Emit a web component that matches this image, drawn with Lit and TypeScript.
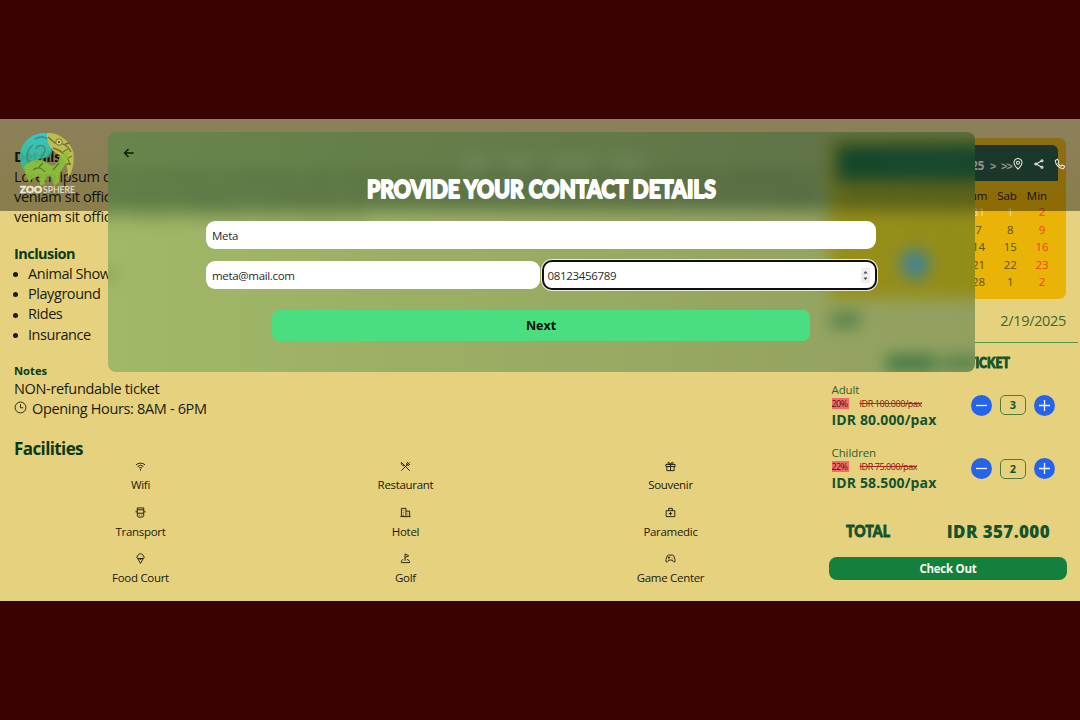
import { LitElement, html, css, svg } from "lit";
import { customElement, property, state } from "lit/decorators.js";
import { classMap } from "lit/directives/class-map.js";

const ICONS: Record<string, unknown> = {
  wifi: svg`<path d="M2 8.500a15 15 0 0 1 20 0M5.500 12a10 10 0 0 1 13 0M8.800 15.400a5 5 0 0 1 6.400 0M12 17v4"/>`,
  restaurant: svg`<path d="M3 3l18 18M21 3L3 21M3 3c-1 4 1 7 6 8M17 2l-3 5 3 3 5-3M16 16l4 4"/>`,
  souvenir: svg`<path d="M2 7.500h20v4.500H2zM4 12v9h16v-9M12 7.500V21M12 7c-2-5-6-5-6-2.500S9 7 12 7c3 0 6 0 6-2.500S14 2 12 7"/>`,
  transport: svg`<path d="M5 2h14v17l-2 3H7l-2-3zM5 6h14M5 13.500h14M2.500 8v4M21.500 8v4"/><path d="M8 17.500h2M14 17.500h2"/>`,
  hotel: svg`<path d="M3 21V3h10v18M13 9h8v12M1 21h22M7 7v2M7 12v2M7 17v4M17 13v1M17 17v1"/>`,
  paramedic: svg`<path d="M2.500 8h19v13h-19zM8 8V3h8v5M12 11v7M8.500 14.500h7"/>`,
  food: svg`<path d="M6 12c-3-1-3-5 0-5 0-7 12-7 12 0 3 0 3 4 0 5zM6 12l6 11 6-11M9 12l3 3 3-3"/>`,
  golf: svg`<path d="M11 17V2l8 4-8 4M7 14c-3 1-4 3-4 7h18c0-4-2-6-6-7"/>`,
  game: svg`<path d="M7 4.500h10c3 0 5 10 5 13 0 3-3 3-4 1l-2-3H8l-2 3c-1 2-4 2-4-1C2 14.500 4 4.500 7 4.500zM6 10h5M8.500 7.500v5M15 8.500v.8M17.500 11.500v.8"/>`,
  clock: svg`<circle cx="12" cy="12" r="10"/><path d="M12 6v6.500h5"/>`,
  pin: svg`<path d="M12 22s8-7.500 8-13a8 8 0 0 0-16 0c0 5.500 8 13 8 13z"/><circle cx="12" cy="9.500" r="3"/>`,
  share: svg`<path d="M18 5.500L6 12l12 6.500"/><circle cx="18" cy="5.500" r="2"/><circle cx="5.500" cy="12" r="2"/><circle cx="18" cy="18.500" r="2"/>`,
  phone: svg`<path d="M7 2.500L2.500 5C3 14 10 21 19 21.500l2.500-4.500-5-3-2.500 2.500c-2.500-1.200-5-3.500-6-6L10 8z"/>`,
  back: svg`<path d="M21.500 12H3.500M11 3.800L3 12l8 8.200"/>`,
};

const icon = (name: string) =>
  html`<svg class="icon" viewBox="0 0 24 24" fill="none" stroke="currentColor">${ICONS[name]}</svg>`;

/** Chunky display lettering, stretched to a set width. */
const display = (text: string, width: number, height: number) => html`
  <svg class="display" width=${width} height=${height} viewBox="0 0 ${width} ${height}">
    <text x="0" y=${height * 0.88} font-size=${height * 1.02} textLength=${width}
      lengthAdjust="spacingAndGlyphs">${text}</text>
  </svg>`;

/** The page as it shows through the frosted dialog: soft shapes, in page coordinates. */
const frostedScene = html`
  <svg class="frost" viewBox="108 132 867 240">
    <rect x="60" y="80" width="980" height="340" fill="#e6d27e"/>
    <g stroke="#1d1a0c" stroke-width="8" opacity=".24" fill="none">
      <path d="M90 177H820" stroke-dasharray="40 5 22 4 55 5 78 6 31 4"/>
      <path d="M90 197H818" stroke-dasharray="25 4 48 5 64 5 20 4 72 6"/>
      <path d="M90 216H365" stroke-dasharray="30 5 52 4 70 5"/>
      <path d="M80 274H116"/>
    </g>
    <rect x="829" y="138" width="237" height="161" rx="7" fill="#eab308"/>
    <path d="M837 145h221v36H837z" fill="#1d5c34"/>
    <path d="M885 165h92" stroke="#f4f0dc" stroke-width="6" opacity=".16"/>
    <g stroke="#5c5208" stroke-width="6" stroke-dasharray="12 20" opacity=".12">
      <path d="M846 230h135M846 247h135M846 265h135M846 282h135"/>
    </g>
    <path d="M850 196h140" stroke="#1d1a0c" stroke-width="7" stroke-dasharray="20 10" opacity=".25"/>
    <circle cx="915" cy="264" r="14.500" fill="#5b9fd8"/>
    <path d="M831 320h29" stroke="#2a6a34" stroke-width="13" opacity=".65"/>
    <path d="M886 363h50" stroke="#237038" stroke-width="15" opacity=".75"/>
    <path d="M942 363h40" stroke="#237038" stroke-width="14" opacity=".55"/>
    <rect x="60" y="80" width="980" height="131.500" fill="#05050f" opacity=".38"/>
    <path d="M462 164H645" stroke="#e9e6d8" stroke-width="10" stroke-dasharray="27 14 30 18 42 14 38 10" opacity=".25"/>
  </svg>`;

@customElement("zoo-logo")
export class ZooLogo extends LitElement {
  static styles = css`
    :host { display: block; width: 56px; height: 66px; }
    svg { display: block; }
    text { font-family: "Lato", sans-serif; fill: #ebe8dc; }
    .zoo { stroke: #ebe8dc; stroke-width: .5; }
  `;
  render() {
    return html`<svg width="56" height="66" viewBox="0 0 56 66" fill="none">
      <defs><linearGradient id="t" x1="0" y1="0" x2="0" y2="1">
        <stop offset="0" stop-color="#27d3d3"/><stop offset="1" stop-color="#3cb489"/></linearGradient></defs>
      <path d="M28 2C13 1 2 11 1 24c0 7 1 12 4 16 2-7 7-8 12-10 4-3 5-2 9-3 5-2 8-7 7-13-1-5-3-8-5-12z" fill="url(#t)" opacity=".88"/>
      <path d="M16 8c8-5 17 0 17 9 0 6-3 9-6 10M14 14c-6 4-7 12-4 17M17 18c2-5 8-4 9 0 1 5-5 5-4 10" stroke="#4f8477" stroke-width="1.500"/>
      <path d="M28 2c11-1 22 7 26 18 2 9 0 20-5 27 0-10-1-17-9-23-6-4-13-10-12-22z" fill="#c3c74b" opacity=".88"/>
      <path d="M29 6l7 6c6-1 13 2 16 9M34 17c8 2 15 8 17 17M46 13l5-1M49 27l4-2M44 21l5-3M47 33l5 0" stroke="#756d37" stroke-width="1.300"/>
      <circle cx="40" cy="11" r="3.200" fill="#ddd784" stroke="#756d37"/><circle cx="40" cy="11" r="1.200" fill="#665f35"/>
      <path d="M5 36c5-5 9-7 14-7 4-1 7 1 10 4l5 2c4-2 6-5 7-11l9-4c0 8-4 15-9 21l-1 10-5 4-2-9-5-1-3 9h-4l-1-9-6 2-4 4-3-6z" fill="#8bc33a" opacity=".88"/>
      <path d="M14 39c5-4 9-2 12 2M34 39l6-7M24 32l-4 4" stroke="#4b7d2c" stroke-width="1.200"/>
      <text class="zoo" x="1" y="61.500" font-size="9.500" font-weight="900" textLength="22" lengthAdjust="spacingAndGlyphs">ZOO</text>
      <text x="24" y="61.500" font-size="9" textLength="32" lengthAdjust="spacingAndGlyphs">SPHERE</text>
    </svg>`;
  }
}

@customElement("app-root")
export class AppRoot extends LitElement {
  @property({ type: String }) name = "Meta";
  @property({ type: String }) email = "meta@mail.com";
  @property({ type: String }) phone = "08123456789";
  @state() private tickets = [
    { label: "Adult", off: "20%", was: "IDR 100.000/pax", price: "IDR 80.000/pax", count: 3 },
    { label: "Children", off: "22%", was: "IDR 75.000/pax", price: "IDR 58.500/pax", count: 2 },
  ];

  static styles = css`
    :host {
      display: flex; flex-direction: column; justify-content: flex-start;
      box-sizing: border-box; width: 1080px; height: 720px; padding-top: 119px;
      background: #3b0202; font-family: "Open Sans", "Noto Sans", sans-serif; color: #1d1a0c;
    }
    * { box-sizing: border-box; }
    .icon { display: block; width: 12px; height: 12px; stroke-width: 2; flex: none; }
    .display { display: block; overflow: visible; font-family: "Lato", sans-serif; font-weight: 900;
      fill: currentColor; stroke: currentColor; stroke-linejoin: round; }
    .stage { position: relative; height: 482px; overflow: hidden; background: #e6d27e; display: flex; }

    .info { width: 821px; padding: 28px 0 0 14px; font-size: 14.500px; line-height: 20.100px; letter-spacing: -.340px; white-space: nowrap; }
    .info h3 { margin: 0; font-size: 14.500px; line-height: 20px; letter-spacing: -.550px; color: #0b3a17; }
    .info .dark { color: #14210c; }
    .info ul { margin: 0 0 18px; padding: 0; list-style: none; }
    .info li { display: flex; align-items: center; gap: 9px; letter-spacing: -.440px; }
    .info li::before { content: ""; width: 5px; height: 5px; border-radius: 50%; background: currentColor; margin: 1px 1px 0 -1px; }
    .info .inclusion { margin-top: 17px; }
    .info h4 { margin: 0; font-size: 11.200px; line-height: 16px; letter-spacing: 0; color: #0b3a17; }
    .hours { display: flex; align-items: center; gap: 5px; }
    .hours .icon { width: 13px; height: 13px; stroke-width: 1.700; margin-top: -3px; }
    .info h2 { margin: 18px 0 0; font-size: 17px; line-height: 24px; letter-spacing: -.600px; color: #0b3a17; }
    .facilities { display: grid; grid-template-columns: repeat(3, 265px); margin-left: -6px; }
    .facility { height: 46.200px; display: flex; flex-direction: column; align-items: center;
      font-size: 11.500px; line-height: 16px; gap: 5.500px; letter-spacing: -.300px; }
    .facility .icon { width: 11px; height: 11px; }

    .booking { width: 259px; padding: 19px 0 0 8px; color: #14532d; }
    .calendar { width: 237px; height: 161px; border-radius: 7px; background: #eab308; padding: 7px 8px; }
    .month { height: 36px; border-radius: 6px 6px 0 0; background: #28583a; color: #f4f0dc; display: flex;
      align-items: center; justify-content: flex-end; gap: 5.500px; padding: 5px 46px 0 0; font-size: 11.500px; font-weight: 700; }
    .arrow { font: 700 10.500px "Liberation Sans", sans-serif; letter-spacing: -.600px; }
    .weekdays { display: grid; grid-template-columns: repeat(7, 30px); padding-left: 5px; margin-top: 5.500px;
      font-size: 11.500px; line-height: 18px; color: #1d1a0c; text-align: center; }
    .days { display: grid; grid-template-columns: repeat(7, 31.700px); margin: -1.500px 0 0 -1px; text-align: center;
      font-size: 11.500px; line-height: 17.500px; color: #5c5208; }
    .day.sunday { color: #f0441c; }
    .day.muted { color: #f0deb0; }
    .date { display: flex; justify-content: flex-end; width: 237px; margin-top: 11px; height: 21px;
      font-size: 14.500px; line-height: 21px; letter-spacing: -.330px; color: #456330; }
    .rule { height: 1px; margin-top: 11px; width: 249px; background: #57984a; }
    .booking .title { display: flex; margin: 13px 0 0 139px; height: 12px; stroke-width: .9; }
    .ticket { display: flex; justify-content: space-between; align-items: center; height: 63.500px; padding: 0 25px 0 2.500px; }
    .tickets { padding-top: 6.500px; }
    .kind { font-size: 11.500px; line-height: 14px; letter-spacing: -.100px; color: #315f2c; }
    .deal { display: flex; gap: 11px; height: 13px; align-items: center; font-size: 9px; line-height: 11px; color: #7a1712; }
    .off { background: #f06a68; width: 17px; letter-spacing: -.600px; color: #4c1410; }
    .was { text-decoration: line-through; text-decoration-color: #b3201a; letter-spacing: -.430px; white-space: nowrap; }
    .price { font-size: 14px; line-height: 20px; letter-spacing: .130px; font-weight: 700; color: #14532d; white-space: nowrap; }
    .stepper { display: flex; align-items: center; gap: 8px; margin-top: -2px; }
    .round { width: 21px; height: 21px; border-radius: 50%; border: 0; padding: 0; background: #2563eb; color: #f3f5ff;
      display: grid; place-items: center; }
    .round svg { width: 13px; height: 13px; stroke: currentColor; stroke-width: 1.300; }
    .count { width: 26px; height: 20px; border: 1px solid #4f7c3a; border-radius: 5px; font-size: 11px; font-weight: 700;
      line-height: 18px; text-align: center; }
    .total { display: flex; justify-content: space-between; align-items: center; width: 221px; height: 22px; padding-left: 17px;
      margin-top: 19.500px; stroke-width: .9; }
    .total .display { margin-top: -4px; }
    .sum { font-size: 17px; font-weight: 800; letter-spacing: .380px; line-height: 22px; }
    .checkout { display: block; margin-top: 14px; width: 238px; height: 23px; border: 0; border-radius: 8px; background: #15803d;
      color: #f4fbf2; font: 700 11.500px/23px "Open Sans", sans-serif; letter-spacing: -.250px; padding: 0; }

    .topbar { position: absolute; inset: 0 0 auto 0; height: 92px; padding: 12px 14px 0 19px; display: flex;
      justify-content: space-between;
      background: linear-gradient(rgba(14, 14, 40, .42), rgba(0, 0, 0, .4)); color: #e9e6d8; }
    .links { display: flex; gap: 9px; margin: 27px 0 0; }
    .links .icon { stroke-width: 2.100; }

    .modal { position: absolute; left: 108px; top: 13px; width: 867px; height: 240px; border-radius: 8px; overflow: hidden; }
    .frost { position: absolute; left: 0; top: 0; width: 867px; height: 240px; overflow: visible; filter: blur(8px); }
    .sheet { position: relative; height: 100%; padding: 15px 99px 0 98px; display: flex; flex-direction: column; align-items: center;
      background: linear-gradient(90deg, rgba(30, 135, 60, .35), rgba(20, 83, 50, .4)); }
    .back { align-self: flex-start; margin-left: -83px; border: 0; background: none; padding: 0; color: #10180c; height: 12px; }
    .back .icon { stroke-width: 2.800; }
    .heading { margin: 17px 0 20px; color: #fff; stroke-width: 1.900; height: 25px; display: grid; place-items: center; }
    .fields { display: grid; grid-template-columns: 333.500px 333.500px; gap: 12px 3px; }
    .field { height: 28px; border-radius: 9px; background: #fff; font-size: 11.500px; line-height: 28px; padding: 1px 6px 0;
      letter-spacing: -.320px; color: #2b2b2b; display: flex; justify-content: space-between; align-items: center; }
    .field.wide { grid-column: span 2; }
    .field.focused { outline: 2px solid #101010; outline-offset: -1px; box-shadow: 0 0 0 2px #e9eddb; padding-left: 5px; }
    .spin { width: 9px; height: 15px; background: #efefef; }
    .next { width: 538px; height: 31px; margin-top: 21px; border: 0; border-radius: 7px; background: #4ade80; color: #06130a;
      font: 700 12.500px/32px "Open Sans", sans-serif; padding: 0; }
  `;

  private renderCalendar() {
    const labels = ["Sen", "Sel", "Rab", "Kam", "Jum", "Sab", "Min"];
    const days = [27, 28, 29, 30, 31, ...Array.from({ length: 28 }, (_, i) => i + 1), 1, 2];
    return html`<div class="calendar">
      <div class="month"><span class="arrow">&lt;&lt;</span><span class="arrow">&lt;</span><span>Februari 2025</span><span class="arrow">&gt;</span><span class="arrow">&gt;&gt;</span></div>
      <div class="weekdays">${labels.map((l) => html`<span>${l}</span>`)}</div>
      <div class="days">
        ${days.map((d, i) => html`<span class=${classMap({
          day: true, sunday: i % 7 === 6, muted: i < 6,
        })}>${d}</span>`)}
      </div>
    </div>`;
  }

  private renderTicket(t: (typeof this.tickets)[number]) {
    return html`<div class="ticket">
      <div>
        <div class="kind">${t.label}</div>
        <div class="deal"><span class="off">${t.off}</span><span class="was">${t.was}</span></div>
        <div class="price">${t.price}</div>
      </div>
      <div class="stepper">
        <button class="round"><svg viewBox="0 0 13 13"><path d="M1 6.500h11"/></svg></button>
        <span class="count">${t.count}</span>
        <button class="round"><svg viewBox="0 0 13 13"><path d="M1 6.500h11M6.500 1v11"/></svg></button>
      </div>
    </div>`;
  }

  render() {
    const facilities = [
      ["wifi", "Wifi"], ["restaurant", "Restaurant"], ["souvenir", "Souvenir"],
      ["transport", "Transport"], ["hotel", "Hotel"], ["paramedic", "Paramedic"],
      ["food", "Food Court"], ["golf", "Golf"], ["game", "Game Center"],
    ];
    return html`<main class="stage">
      <section class="info">
        <h3 class="dark">Details</h3>
        <div>Lorem ipsum dolor</div>
        <div>veniam sit officia</div>
        <div>veniam sit officia</div>
        <h3 class="inclusion">Inclusion</h3>
        <ul><li>Animal Show</li><li>Playground</li><li>Rides</li><li>Insurance</li></ul>
        <h4>Notes</h4>
        <div>NON-refundable ticket</div>
        <div class="hours">${icon("clock")}<span>Opening Hours: 8AM - 6PM</span></div>
        <h2>Facilities</h2>
        <div class="facilities">
          ${facilities.map(([i, l]) => html`<div class="facility">${icon(i)}<span>${l}</span></div>`)}
        </div>
      </section>

      <aside class="booking">
        ${this.renderCalendar()}
        <div class="date">2/19/2025</div>
        <div class="rule"></div>
        <div class="title">${display("TICKET", 42, 14)}</div>
        <div class="tickets">${this.tickets.map((t) => this.renderTicket(t))}</div>
        <div class="total">${display("TOTAL", 44, 17)}<span class="sum">IDR 357.000</span></div>
        <button class="checkout">Check Out</button>
      </aside>

      <header class="topbar">
        <zoo-logo></zoo-logo>
        <div class="links">${icon("pin")}${icon("share")}${icon("phone")}</div>
      </header>

      <section class="modal">
        ${frostedScene}
        <div class="sheet">
          <button class="back">${icon("back")}</button>
          <div class="heading">${display("PROVIDE YOUR CONTACT DETAILS", 349, 25)}</div>
          <div class="fields">
            <div class="field wide">${this.name}</div>
            <div class="field">${this.email}</div>
            <div class="field focused">${this.phone}
              <svg class="spin" viewBox="0 0 9 15"><path d="M2.500 5.500l2-2.500 2 2.500zM2.500 9.500l2 2.500 2-2.500z" fill="#444"/></svg>
            </div>
          </div>
          <button class="next">Next</button>
        </div>
      </section>
    </main>`;
  }
}
